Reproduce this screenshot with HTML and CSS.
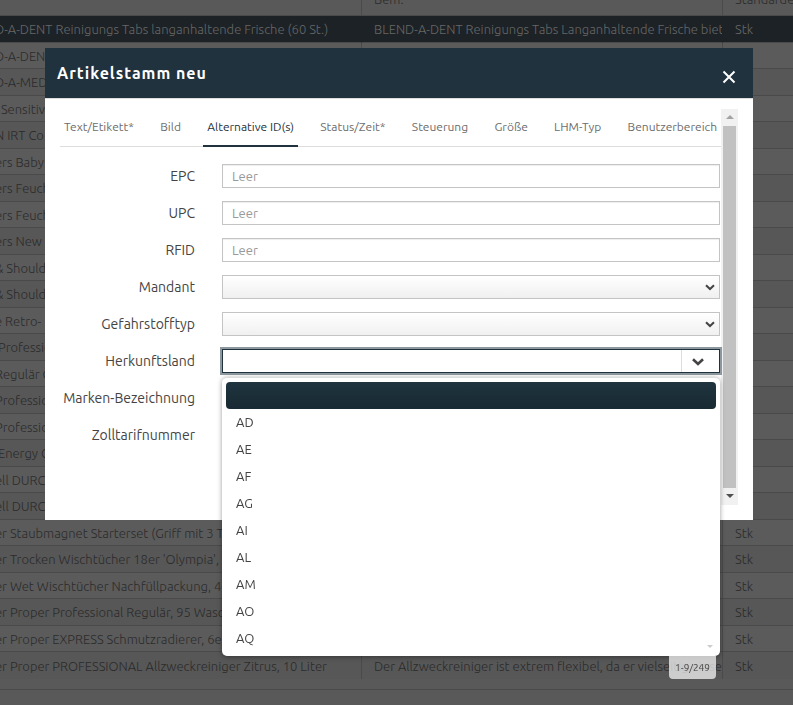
FILE: index.html
```html
<!DOCTYPE html>
<html lang="de">
<head>
    <meta charset="utf-8">
    <title>Artikelstamm</title>
    <link rel="stylesheet" href="styles.css">
</head>
<body>
    <table class="grid">
        <colgroup>
            <col class="col-name">
            <col class="col-text">
            <col class="col-unit">
        </colgroup>
        <thead>
            <tr><th></th><th>Bem.</th><th>Standarde</th></tr>
        </thead>
        <tbody>
            <tr class="selected"><td>D-A-DENT Reinigungs Tabs langanhaltende Frische (60 St.)</td><td>BLEND-A-DENT Reinigungs Tabs Langanhaltende Frische bietet</td><td>Stk</td></tr>
            <tr><td>D-A-DENT</td><td></td><td></td></tr>
            <tr><td>D-A-MED</td><td></td><td></td></tr>
            <tr><td>&nbsp; Sensitive</td><td></td><td></td></tr>
            <tr><td>N IRT Co</td><td></td><td></td></tr>
            <tr><td>ers Baby</td><td></td><td></td></tr>
            <tr><td>ers Feucht</td><td></td><td></td></tr>
            <tr><td>ers Feucht</td><td></td><td></td></tr>
            <tr><td>ers New</td><td></td><td></td></tr>
            <tr><td>&amp; Shoulders</td><td></td><td></td></tr>
            <tr><td>&amp; Shoulders</td><td></td><td></td></tr>
            <tr><td>e Retro-</td><td></td><td></td></tr>
            <tr><td>&nbsp;Professional</td><td></td><td></td></tr>
            <tr><td>Regulär C</td><td></td><td></td></tr>
            <tr><td>Professional</td><td></td><td></td></tr>
            <tr><td>Professional</td><td></td><td></td></tr>
            <tr><td>&nbsp;Energy C</td><td></td><td></td></tr>
            <tr><td>ell DURC</td><td></td><td></td></tr>
            <tr><td>ell DURC</td><td></td><td></td></tr>
            <tr><td>er Staubmagnet Starterset (Griff mit 3 T</td><td></td><td>Stk</td></tr>
            <tr><td>er Trocken Wischtücher 18er 'Olympia',</td><td></td><td>Stk</td></tr>
            <tr><td>er Wet Wischtücher Nachfüllpackung, 4e</td><td></td><td>Stk</td></tr>
            <tr><td>er Proper Professional Regulär, 95 Wasc</td><td></td><td>Stk</td></tr>
            <tr><td>er Proper EXPRESS Schmutzradierer, 6er</td><td></td><td>Stk</td></tr>
            <tr><td>er Proper PROFESSIONAL Allzweckreiniger Zitrus, 10 Liter</td><td>Der Allzweckreiniger ist extrem flexibel, da er vielseitig einsetzbar</td><td>Stk</td></tr>
        </tbody>
    </table>

    <div class="overlay">
        <div class="modal" role="dialog" aria-labelledby="modalTitle">
            <div class="modal-header">
                <h1 id="modalTitle">Artikelstamm neu</h1>
                <button type="button" class="close" aria-label="Schließen">
                    <svg width="14" height="14" viewBox="0 0 14 14"><path d="M1.5 1.5L12.5 12.5M12.5 1.5L1.5 12.5" stroke="#fff" stroke-width="2" fill="none"/></svg>
                </button>
            </div>

            <div class="modal-body">
                <div class="content">
                    <nav class="tabs">
                        <a href="#text">Text/Etikett*</a>
                        <a href="#bild">Bild</a>
                        <a href="#ids" class="active">Alternative ID(s)</a>
                        <a href="#status">Status/Zeit*</a>
                        <a href="#steuerung">Steuerung</a>
                        <a href="#groesse">Größe</a>
                        <a href="#lhm">LHM-Typ</a>
                        <a href="#benutzer">Benutzerbereich</a>
                    </nav>

                    <form class="form">
                        <label for="epc">EPC</label>
                        <input type="text" id="epc" placeholder="Leer">
                        <label for="upc">UPC</label>
                        <input type="text" id="upc" placeholder="Leer">
                        <label for="rfid">RFID</label>
                        <input type="text" id="rfid" placeholder="Leer">
                        <label for="mandant">Mandant</label>
                        <div class="select-wrap">
                            <select id="mandant"><option></option></select>
                            <svg width="10" height="7" viewBox="0 0 10 7"><path d="M1 1.2L5 5L9 1.2" stroke="#444" stroke-width="2" fill="none"/></svg>
                        </div>
                        <label for="gefahr">Gefahrstofftyp</label>
                        <div class="select-wrap">
                            <select id="gefahr"><option></option></select>
                            <svg width="10" height="7" viewBox="0 0 10 7"><path d="M1 1.2L5 5L9 1.2" stroke="#444" stroke-width="2" fill="none"/></svg>
                        </div>
                        <label for="land">Herkunftsland</label>
                        <div class="combo">
                            <input type="text" id="land">
                            <button type="button" aria-label="Liste öffnen">
                                <svg width="12" height="8" viewBox="0 0 12 8"><path d="M1 1.2L6 6L11 1.2" stroke="#444" stroke-width="2.6" fill="none"/></svg>
                            </button>
                            <div class="dropdown">
                                <ul class="options" role="listbox" aria-label="Herkunftsland">
                                    <li class="current" role="option"></li>
                                    <li role="option">AD</li>
                                    <li role="option">AE</li>
                                    <li role="option">AF</li>
                                    <li role="option">AG</li>
                                    <li role="option">AI</li>
                                    <li role="option">AL</li>
                                    <li role="option">AM</li>
                                    <li role="option">AO</li>
                                    <li role="option">AQ</li>
                                </ul>
                                <span class="more"></span>
                                <span class="count">1-9/249</span>
                            </div>
                        </div>
                        <label for="marke">Marken-Bezeichnung</label>
                        <input type="text" id="marke">
                        <label for="zoll">Zolltarifnummer</label>
                        <input type="text" id="zoll">
                    </form>
                </div>
                <div class="scrollbar">
                    <span class="arrow up"></span>
                    <span class="thumb"></span>
                    <span class="arrow down"></span>
                </div>
            </div>
        </div>
    </div>
</body>
</html>
```

FILE: styles.css
```css
* {
  box-sizing: border-box;
}

body {
  margin: 0;
  min-height: 100vh;
  overflow: hidden;
  background-color: #595959;
  color: #2b2b2b;
  font-family: Ubuntu, "Noto Sans", sans-serif;
  font-size: 13px;
}

/* article list behind the dialog */
.grid {
  width: calc(100% + 5px);
  margin: -1px 0 0 -5px;
  table-layout: fixed;
  border-collapse: separate;
  border-spacing: 0;
  border-bottom: 1px solid #4a4a4a;
  padding-bottom: 10px;
}

.col-name {
  width: 367px;
}

.col-text {
  width: 361px;
}

.grid th,
.grid td {
  height: 27px;
  padding: 0 0 0 12px;
  border-right: 1px solid #4a4a4a;
  border-bottom: 1px solid #4a4a4a;
  font-weight: 300;
  line-height: 20px;
  text-align: left;
  white-space: nowrap;
  overflow: hidden;
}

.grid th {
  height: 17px;
  line-height: 1px;
  vertical-align: top;
}

.grid td:first-child {
  padding-left: 0;
}

.grid th:last-child,
.grid td:last-child {
  border-right: 0;
}

.grid tr:nth-child(even) td {
  height: 26px;
  background-color: #5b5b5b;
}

.grid tr:nth-child(odd) td {
  background-color: #575757;
}

.grid tbody tr:last-child td {
  border-bottom: 0;
}

.grid .selected td {
  background-color: #1c2226 !important;
  border-right-color: #1c2226;
  color: #676767;
}

.overlay {
  position: fixed;
  inset: 0;
  padding: 48px 40px 0 45px;
}

.modal {
  background-color: #fff;
  color: #444;
}

.modal-header {
  display: flex;
  align-items: center;
  justify-content: space-between;
  height: 50px;
  padding: 0 17px 0 12px;
  background-color: #1f323d;
  color: #fff;
}

.modal-header h1 {
  margin: 0;
  font-size: 16px;
  font-weight: 700;
  letter-spacing: 1px;
}

.close {
  display: flex;
  padding: 8px 0 0;
  border: 0;
  background: none;
}

.modal-body {
  display: flex;
  padding: 10px 15px 15px;
  border-top: 1px solid #ddd;
}

.content {
  flex: 1;
  min-width: 0;
  height: 396px;
}

.tabs {
  display: flex;
  justify-content: space-between;
  height: 38px;
  border-bottom: 1px solid #ddd;
}

.tabs a {
  height: 38px;
  padding: 0 4px;
  color: #6c6c6c;
  font-size: 12px;
  line-height: 36px;
  text-decoration: none;
  white-space: nowrap;
}

.tabs .active {
  border-bottom: 2px solid #1f323d;
  color: #1f323d;
}

.form {
  display: grid;
  grid-template-columns: 135px 1fr;
  grid-auto-rows: 24px;
  gap: 13px 27px;
  padding: 17px 1px 0 0;
}

.form label {
  font-size: 14px;
  line-height: 24px;
  text-align: right;
  white-space: nowrap;
}

.form input,
.form select {
  width: 100%;
  height: 24px;
  margin: 0;
  padding: 0 9px;
  border: 1px solid #c4c4c4;
  border-radius: 0;
  background-color: #fff;
  box-shadow: inset 0 1px 1px #eee;
  color: #444;
  font: inherit;
  outline: none;
}

.form input::placeholder {
  color: #999;
}

.select-wrap {
  display: grid;
  align-items: center;
}

.select-wrap > * {
  grid-area: 1 / 1;
}

.select-wrap svg {
  justify-self: end;
  margin-right: 5px;
  pointer-events: none;
}

.form select {
  appearance: none;
  background: linear-gradient(#fff, #f0f0f0);
  box-shadow: none;
}

.combo {
  position: relative;
  display: flex;
  border: 1px solid #1f323d;
  box-shadow: 0 0 0 2px #8d989e;
}

.combo input {
  flex: 1;
  min-width: 0;
  height: 22px;
  border: 0;
  box-shadow: none;
}

.combo button {
  display: flex;
  align-items: center;
  width: 38px;
  padding: 2px 0 0 10px;
  border: 0;
  border-left: 1px solid #ddd;
  background: #fff;
}

.dropdown {
  position: absolute;
  top: 27px;
  left: -1px;
  right: -1px;
  z-index: 2;
}

.options {
  margin: 0;
  padding: 4px 4px;
  border: 1px solid #ddd;
  border-width: 1px 0 0;
  border-radius: 5px;
  background-color: #fff;
  box-shadow: 0 1px 5px rgba(0, 0, 0, 0.4);
  list-style: none;
}

.options li {
  height: 27px;
  padding: 0 10px;
  line-height: 27px;
}

.options .current {
  border-radius: 4px;
  background: linear-gradient(#1f343f, #182a33);
}

.more {
  position: absolute;
  right: 7px;
  bottom: 8px;
  border: 3px solid transparent;
  border-top-color: #ccc;
  border-bottom: 0;
}

.count {
  position: absolute;
  top: 100%;
  right: 4px;
  width: 47px;
  height: 23px;
  border-radius: 0 0 4px 4px;
  background-color: rgba(255, 255, 255, 0.7);
  font-size: 10px;
  line-height: 23px;
  text-align: center;
}

.scrollbar {
  display: flex;
  flex-direction: column;
  align-items: center;
  width: 17px;
  background-color: #f1f1f1;
}

.arrow {
  height: 17px;
  padding-top: 6px;
}

.arrow::before {
  content: "";
  display: block;
  border: 4px solid transparent;
}

.up::before {
  border-top: 0;
  border-bottom-color: #a3a3a3;
}

.down::before {
  border-bottom: 0;
  border-top-color: #505050;
}

.thumb {
  flex: 1;
  width: 13px;
  background-color: #c1c1c1;
}
```
